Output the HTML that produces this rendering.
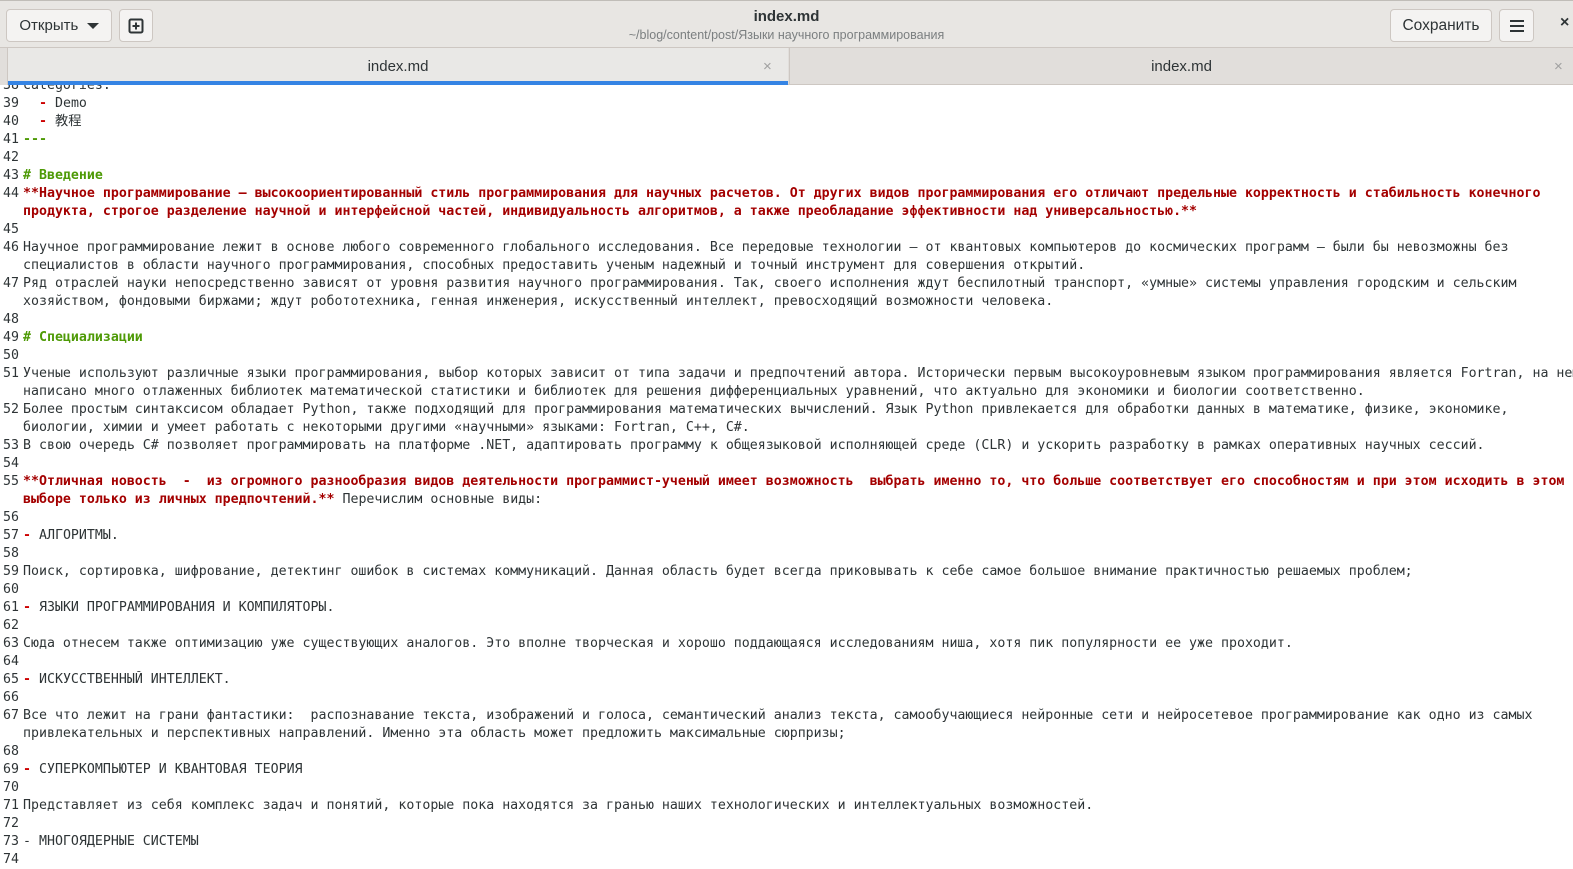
<!DOCTYPE html>
<html><head><meta charset="utf-8"><style>
*{margin:0;padding:0;box-sizing:border-box}
body{width:1573px;height:864px;overflow:hidden;background:#fff;font-family:"Liberation Sans","DejaVu Sans",sans-serif;position:relative}
.hdr{position:absolute;left:0;top:0;width:1573px;height:48px;background:#e8e6e3;border-bottom:1px solid #cdc7c2;border-top:1px solid #c0bdb8}
.btn{position:absolute;top:8px;height:33px;border:1px solid #cdc7c2;border-radius:4px;background:#f4f3f2;font-size:15px;color:#2e3436;display:flex;align-items:center;justify-content:center}
.title{position:absolute;left:0;width:1573px;text-align:center}
.tabs{position:absolute;left:0;top:48px;width:1573px;height:37px;background:#e1dedb;border-bottom:1px solid #cdc7c2;z-index:2}
.tab{position:absolute;top:0;height:37px;font-size:15px;color:#2e3436;text-align:center;line-height:37px}
.x{position:absolute;top:0;font-size:15px;color:#a0a0a0}
.ed{position:absolute;left:0;top:77px;width:1573px;font-family:"DejaVu Sans Mono","Liberation Mono",monospace;font-size:13.27px;color:#2e3436;z-index:1}
.r{height:18px;line-height:18px;white-space:pre;position:relative;padding-left:23px;overflow:hidden;width:1573px}
.n{position:absolute;left:3px;top:0}
.b{color:#a40000;font-weight:bold}
.g{color:#4e9a06;font-weight:bold}
.d{color:#cc0000;font-weight:bold}
</style></head><body>
<div class="hdr">
 <div class="btn" style="left:6px;width:106px">Открыть&nbsp;&nbsp;<svg width="12" height="8"><path d="M0 1h12L6 7z" fill="#2e3436"/></svg></div>
 <div class="btn" style="left:119px;width:34px"><svg width="16" height="16"><rect x="1.5" y="1.5" width="13" height="13" rx="1.5" fill="none" stroke="#2e3436" stroke-width="2"/><path d="M8 4.5v7M4.5 8h7" stroke="#2e3436" stroke-width="2"/></svg></div>
 <div class="title" style="top:7px;font-size:15px;font-weight:bold;color:#2e3436">index.md</div>
 <div class="title" style="top:27px;font-size:12.5px;color:#7b7f80">~/blog/content/post/Языки научного программирования</div>
 <div class="btn" style="left:1390px;width:102px;font-size:15.5px">Сохранить</div>
 <div class="btn" style="left:1499px;width:35px"><svg width="14" height="12"><path d="M0 1h14M0 6h14M0 11h14" stroke="#2e3436" stroke-width="2"/></svg></div>
 <div style="position:absolute;left:1560px;top:13px;font-size:16px;font-weight:bold;color:#2e3436">×</div>
</div>
<div class="tabs">
 <div class="tab" style="left:8px;width:780px;background:#e9e8e6;border-bottom:4px solid #3584e4">index.md<span class="x" style="left:755px">×</span></div>
 <div style="position:absolute;left:0;top:0;width:8px;height:37px;background:#e1dedb;border-right:1px solid #cdc7c2"></div>
 <div class="tab" style="left:789px;width:784px;border-left:1px solid #cdc7c2">index.md<span class="x" style="left:764px">×</span></div>
</div>
<div class="ed">
<div class="r"><span class="n">38</span>categories:</div>
<div class="r"><span class="n">39</span>  <span class="d">-</span> Demo</div>
<div class="r"><span class="n">40</span>  <span class="d">-</span> 教程</div>
<div class="r"><span class="n">41</span><span class="g">---</span></div>
<div class="r"><span class="n">42</span></div>
<div class="r"><span class="n">43</span><span class="g"># Введение</span></div>
<div class="r"><span class="n">44</span><span class="b">**Научное программирование — высокоориентированный стиль программирования для научных расчетов. От других видов программирования его отличают предельные корректность и стабильность конечного</span></div>
<div class="r"><span class="b">продукта, строгое разделение научной и интерфейсной частей, индивидуальность алгоритмов, а также преобладание эффективности над универсальностью.**</span></div>
<div class="r"><span class="n">45</span></div>
<div class="r"><span class="n">46</span>Научное программирование лежит в основе любого современного глобального исследования. Все передовые технологии — от квантовых компьютеров до космических программ — были бы невозможны без</div>
<div class="r">специалистов в области научного программирования, способных предоставить ученым надежный и точный инструмент для совершения открытий.</div>
<div class="r"><span class="n">47</span>Ряд отраслей науки непосредственно зависят от уровня развития научного программирования. Так, своего исполнения ждут беспилотный транспорт, «умные» системы управления городским и сельским</div>
<div class="r">хозяйством, фондовыми биржами; ждут робототехника, генная инженерия, искусственный интеллект, превосходящий возможности человека.</div>
<div class="r"><span class="n">48</span></div>
<div class="r"><span class="n">49</span><span class="g"># Специализации</span></div>
<div class="r"><span class="n">50</span></div>
<div class="r"><span class="n">51</span>Ученые используют различные языки программирования, выбор которых зависит от типа задачи и предпочтений автора. Исторически первым высокоуровневым языком программирования является Fortran, на нем</div>
<div class="r">написано много отлаженных библиотек математической статистики и библиотек для решения дифференциальных уравнений, что актуально для экономики и биологии соответственно.</div>
<div class="r"><span class="n">52</span>Более простым синтаксисом обладает Python, также подходящий для программирования математических вычислений. Язык Python привлекается для обработки данных в математике, физике, экономике,</div>
<div class="r">биологии, химии и умеет работать с некоторыми другими «научными» языками: Fortran, C++, C#.</div>
<div class="r"><span class="n">53</span>В свою очередь C# позволяет программировать на платформе .NET, адаптировать программу к общеязыковой исполняющей среде (CLR) и ускорить разработку в рамках оперативных научных сессий.</div>
<div class="r"><span class="n">54</span></div>
<div class="r"><span class="n">55</span><span class="b">**Отличная новость  -  из огромного разнообразия видов деятельности программист-ученый имеет возможность  выбрать именно то, что больше соответствует его способностям и при этом исходить в этом</span></div>
<div class="r"><span class="b">выборе только из личных предпочтений.**</span> Перечислим основные виды:</div>
<div class="r"><span class="n">56</span></div>
<div class="r"><span class="n">57</span><span class="d">-</span> АЛГОРИТМЫ.</div>
<div class="r"><span class="n">58</span></div>
<div class="r"><span class="n">59</span>Поиск, сортировка, шифрование, детектинг ошибок в системах коммуникаций. Данная область будет всегда приковывать к себе самое большое внимание практичностью решаемых проблем;</div>
<div class="r"><span class="n">60</span></div>
<div class="r"><span class="n">61</span><span class="d">-</span> ЯЗЫКИ ПРОГРАММИРОВАНИЯ И КОМПИЛЯТОРЫ.</div>
<div class="r"><span class="n">62</span></div>
<div class="r"><span class="n">63</span>Сюда отнесем также оптимизацию уже существующих аналогов. Это вполне творческая и хорошо поддающаяся исследованиям ниша, хотя пик популярности ее уже проходит.</div>
<div class="r"><span class="n">64</span></div>
<div class="r"><span class="n">65</span><span class="d">-</span> ИСКУССТВЕННЫЙ ИНТЕЛЛЕКТ.</div>
<div class="r"><span class="n">66</span></div>
<div class="r"><span class="n">67</span>Все что лежит на грани фантастики:  распознавание текста, изображений и голоса, семантический анализ текста, самообучающиеся нейронные сети и нейросетевое программирование как одно из самых</div>
<div class="r">привлекательных и перспективных направлений. Именно эта область может предложить максимальные сюрпризы;</div>
<div class="r"><span class="n">68</span></div>
<div class="r"><span class="n">69</span><span class="d">-</span> СУПЕРКОМПЬЮТЕР И КВАНТОВАЯ ТЕОРИЯ</div>
<div class="r"><span class="n">70</span></div>
<div class="r"><span class="n">71</span>Представляет из себя комплекс задач и понятий, которые пока находятся за гранью наших технологических и интеллектуальных возможностей.</div>
<div class="r"><span class="n">72</span></div>
<div class="r"><span class="n">73</span>- МНОГОЯДЕРНЫЕ СИСТЕМЫ</div>
<div class="r"><span class="n">74</span></div>
</div>
</body></html>
